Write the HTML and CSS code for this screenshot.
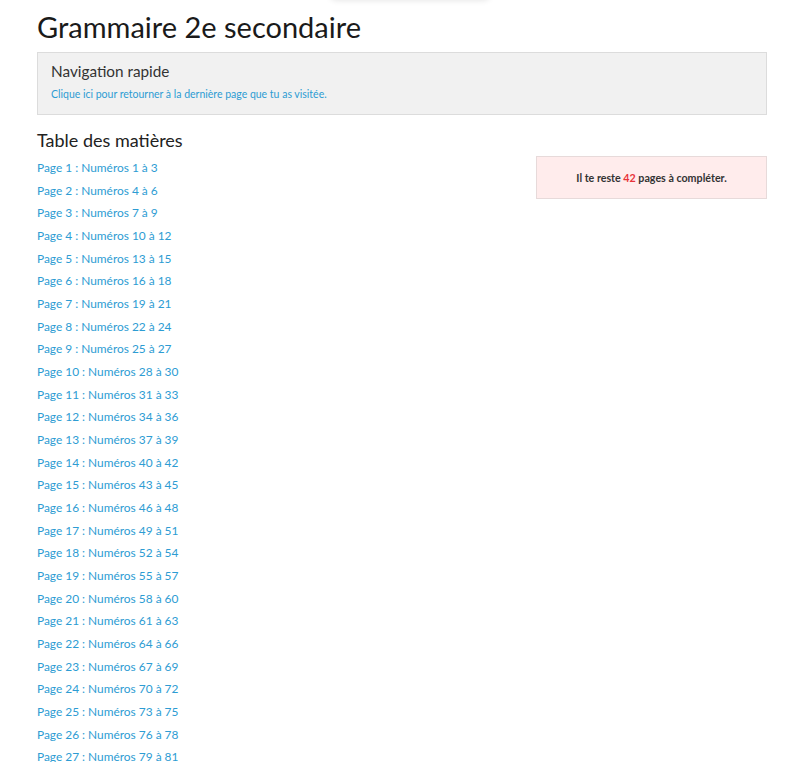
FILE: index.html
```html
<!DOCTYPE html>
<html lang="fr">
  <head>
    <meta charset="UTF-8" />
    <meta name="viewport" content="width=device-width, initial-scale=1" />
    <title>Grammaire 2e secondaire</title>
    <link rel="stylesheet" href="styles.css">
  </head>
  <body>
    <div class="top-tab"></div>
    <div id="page">
      <h1>Grammaire 2e secondaire</h1>
      <div class="quick-nav">
        <h2>Navigation rapide</h2>
        <a href="#">Clique ici pour retourner à la dernière page que tu as visitée.</a>
      </div>
      <div class="content-row">
        <div class="toc">
          <h3>Table des matières</h3>
          <ul>
            <li><a href="#">Page 1 : Numéros 1 à 3</a></li>
            <li><a href="#">Page 2 : Numéros 4 à 6</a></li>
            <li><a href="#">Page 3 : Numéros 7 à 9</a></li>
            <li><a href="#">Page 4 : Numéros 10 à 12</a></li>
            <li><a href="#">Page 5 : Numéros 13 à 15</a></li>
            <li><a href="#">Page 6 : Numéros 16 à 18</a></li>
            <li><a href="#">Page 7 : Numéros 19 à 21</a></li>
            <li><a href="#">Page 8 : Numéros 22 à 24</a></li>
            <li><a href="#">Page 9 : Numéros 25 à 27</a></li>
            <li><a href="#">Page 10 : Numéros 28 à 30</a></li>
            <li><a href="#">Page 11 : Numéros 31 à 33</a></li>
            <li><a href="#">Page 12 : Numéros 34 à 36</a></li>
            <li><a href="#">Page 13 : Numéros 37 à 39</a></li>
            <li><a href="#">Page 14 : Numéros 40 à 42</a></li>
            <li><a href="#">Page 15 : Numéros 43 à 45</a></li>
            <li><a href="#">Page 16 : Numéros 46 à 48</a></li>
            <li><a href="#">Page 17 : Numéros 49 à 51</a></li>
            <li><a href="#">Page 18 : Numéros 52 à 54</a></li>
            <li><a href="#">Page 19 : Numéros 55 à 57</a></li>
            <li><a href="#">Page 20 : Numéros 58 à 60</a></li>
            <li><a href="#">Page 21 : Numéros 61 à 63</a></li>
            <li><a href="#">Page 22 : Numéros 64 à 66</a></li>
            <li><a href="#">Page 23 : Numéros 67 à 69</a></li>
            <li><a href="#">Page 24 : Numéros 70 à 72</a></li>
            <li><a href="#">Page 25 : Numéros 73 à 75</a></li>
            <li><a href="#">Page 26 : Numéros 76 à 78</a></li>
            <li><a href="#">Page 27 : Numéros 79 à 81</a></li>
          </ul>
        </div>
        <aside class="progress">
          Il te reste <span class="count">42</span> pages à compléter.
        </aside>
      </div>
    </div>
  </body>
</html>
```

FILE: styles.css
```css
body {
  margin: 0;
  padding: 0;
  font-family: Lato, "Open Sans", Arial, sans-serif;
  background-color: #fff;
  color: #222;
}

a {
  color: #2d9cd3;
  text-decoration: none;
}

/* shadow of the fixed tab sitting above the viewport */
.top-tab {
  position: absolute;
  top: -40px;
  left: 330px;
  width: 160px;
  height: 40px;
  border-radius: 6px;
  background-color: #fff;
  box-shadow: 0 0 6px rgba(0, 0, 0, 0.12);
}

#page {
  width: 730px;
  margin: 0 0 0 37px;
  padding-top: 12px;
}

h1 {
  margin: 0 0 10px;
  font-size: 29px;
  font-weight: normal;
  line-height: 30px;
  color: #1a1a1a;
}

.quick-nav {
  padding: 9px 13px 13px;
  background-color: #f1f1f1;
  border: 1px solid #dcdcdc;
}

.quick-nav h2 {
  margin: 0 0 2px;
  font-size: 15.3px;
  font-weight: normal;
  color: #333;
}

.quick-nav a {
  font-size: 10.5px;
}

.content-row {
  display: flex;
  justify-content: space-between;
  margin-top: 13px;
}

.toc h3 {
  margin: 0 0 5px;
  font-size: 18px;
  font-weight: normal;
  line-height: 24px;
  color: #222;
}

.toc ul {
  margin: 0;
  padding: 0;
  list-style: none;
}

.toc li {
  font-size: 11.9px;
  line-height: 22.67px;
}

.progress {
  align-self: flex-start;
  width: 229px;
  margin-top: 28px;
  padding: 14px 0 14px;
  text-align: center;
  font-size: 10.7px;
  line-height: 13px;
  font-weight: bold;
  color: #333;
  background-color: #ffecec;
  border: 1px solid #e7dada;
}

.progress .count {
  color: #e8333a;
}
```
